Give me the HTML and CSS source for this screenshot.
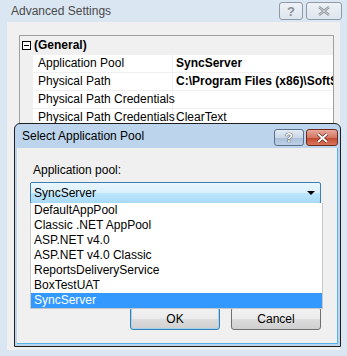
FILE: index.html
```html
<!DOCTYPE html>
<html lang="en">
<head>
    <meta charset="UTF-8">
    <title>Advanced Settings</title>
    <link rel="stylesheet" href="styles.css">
</head>
<body>
<div class="window">
    <div class="titlebar">
        <span class="title">Advanced Settings</span>
        <div class="caption-btns">
            <span class="cap-btn help">?</span>
            <span class="cap-btn close">
                <svg width="12" height="10" viewBox="0 0 12 10"><path d="M1 1 L11 9 M11 1 L1 9" stroke="#8a8f96" stroke-width="2.4" fill="none"/><path d="M1 1 L11 9 M11 1 L1 9" stroke="#e9edf2" stroke-width="0.8" fill="none"/></svg>
            </span>
        </div>
    </div>
    <div class="client">
        <div class="grid">
            <div class="category">
                <span class="toggle"></span>
                <span>(General)</span>
            </div>
            <div class="row"><span class="gutter"></span><span class="name">Application Pool</span><span class="value">SyncServer</span></div>
            <div class="row"><span class="gutter"></span><span class="name">Physical Path</span><span class="value">C:\Program Files (x86)\SoftServe</span></div>
            <div class="row"><span class="gutter"></span><span class="name">Physical Path Credentials</span><span class="value"></span></div>
            <div class="row"><span class="gutter"></span><span class="name">Physical Path Credentials</span><span class="value plain">ClearText</span></div>
        </div>
    </div>
</div>

<div class="dialog">
    <div class="dlg-title">
        <span class="title">Select Application Pool</span>
        <div class="caption-btns">
            <span class="dlg-btn help">?</span>
            <span class="dlg-btn close">
                <svg width="13" height="10" viewBox="0 0 13 10"><path d="M2 1 L11 9 M11 1 L2 9" stroke="#5a1a10" stroke-width="3.2" fill="none"/><path d="M2 1 L11 9 M11 1 L2 9" stroke="#ffffff" stroke-width="2" fill="none"/></svg>
            </span>
        </div>
    </div>
    <div class="dlg-client">
        <div class="label">Application pool:</div>
        <div class="combo">
            <span>SyncServer</span>
            <span class="arrow"></span>
            <ul class="droplist">
                <li>DefaultAppPool</li>
                <li>Classic .NET AppPool</li>
                <li>ASP.NET v4.0</li>
                <li>ASP.NET v4.0 Classic</li>
                <li>ReportsDeliveryService</li>
                <li>BoxTestUAT</li>
                <li class="selected">SyncServer</li>
            </ul>
        </div>
        <div class="buttons">
            <button class="btn default">OK</button>
            <button class="btn">Cancel</button>
        </div>
    </div>
</div>
</body>
</html>
```

FILE: styles.css
```css
body { margin: 0; padding: 0; font-family: "Liberation Sans", Arial, sans-serif; font-size: 12px; color: #000; }

.window {
    width: 347px;
    height: 356px;
    background-color: #dbe6f3;
    display: flex;
    flex-direction: column;
    overflow: hidden;
}
.titlebar { height: 22px; display: flex; align-items: center; justify-content: space-between; padding: 0 5px 0 11px; }
.titlebar .title { color: #4a4a4a; font-size: 12px; }
.caption-btns { display: flex; gap: 3px; }
.cap-btn {
    height: 16px;
    border: 1px solid #8f9aa7;
    border-radius: 3px;
    background: linear-gradient(#eef2f7, #dde5ee);
    display: flex;
    align-items: center;
    justify-content: center;
    color: #8a8f96;
    font-weight: bold;
    font-size: 13px;
}
.cap-btn.help { width: 22px; }
.cap-btn.close { width: 34px; }

.client { flex: 1; margin: 0 7px 6px 7px; background-color: #f0f0f0; padding: 13px 0 0 12px; }
.grid { width: 313px; border: 1px solid #a0a0a0; background: #fff; }
.category { height: 18px; background: #f0f0f0; display: flex; align-items: center; font-weight: bold; gap: 3px; padding-left: 2px; }
.toggle { width: 7px; height: 7px; border: 1px solid #000; position: relative; background: #fff; }
.toggle::after { content: ""; position: absolute; left: 1px; right: 1px; top: 3px; height: 1px; background: #000; }
.row { height: 18px; display: flex; border-top: 1px solid #f0f0f0; box-sizing: border-box; }
.gutter { width: 13px; background: #f0f0f0; flex: none; }
.name { width: 134px; padding-left: 5px; border-right: 1px solid #f0f0f0; line-height: 17px; white-space: nowrap; flex: none; }
.value { padding-left: 3px; font-weight: bold; line-height: 17px; white-space: nowrap; overflow: hidden; flex: 1; }
.value.plain { font-weight: normal; }

.dialog {
    position: absolute;
    left: 14px;
    top: 123px;
    width: 327px;
    height: 224px;
    box-sizing: border-box;
    border: 1px solid #1e1e1e;
    border-radius: 6px 6px 0 0;
    background: #bcd4ec;
    display: flex;
    flex-direction: column;
    padding: 0 2px 2px 2px;
}
.dlg-title { height: 24px; display: flex; align-items: center; justify-content: space-between; padding: 0 0 0 5px; }
.dlg-title .title { font-size: 12px; color: #000; }
.dlg-title .caption-btns { gap: 2px; margin-top: 3px; }
.dlg-btn {
    height: 15px;
    border: 1px solid #5a6f88;
    border-radius: 3px;
    display: flex;
    align-items: center;
    justify-content: center;
    font-weight: bold;
    font-size: 13px;
}
.dlg-btn.help { width: 28px; background: linear-gradient(#e4ecf5 0%, #c9d7e7 50%, #abc0d8 51%, #bcd0e6 100%); color: #fff; text-shadow: 0 0 1px #222, 0 0 1px #222; }
.dlg-btn.close { width: 30px; border-color: #6d2a1e; background: linear-gradient(#e9a99b 0%, #d47865 50%, #c3462d 51%, #d8775a 100%); }

.dlg-client {
    flex: 1;
    background: #f0f0f0;
    border-bottom: 1px solid #53b3ea;
    border-right: 1px solid #53b3ea;
    display: flex;
    flex-direction: column;
    padding: 15px 16px 0 13px;
}
.label { padding-left: 3px; line-height: 14px; }
.combo {
    position: relative;
    margin-top: 5px;
    height: 22px;
    box-sizing: border-box;
    border: 1px solid #3c7fb1;
    border-radius: 2px;
    background: linear-gradient(#eaf6fd 0%, #d9f0fc 50%, #bee6fd 51%, #a7d9f5 100%);
    display: flex;
    align-items: center;
    justify-content: space-between;
    padding: 0 5px 0 3px;
}
.arrow { width: 0; height: 0; border-left: 4px solid transparent; border-right: 4px solid transparent; border-top: 4px solid #000; }
.droplist {
    position: absolute;
    left: -1px;
    top: 20px;
    width: 293px;
    margin: 0;
    padding: 0;
    list-style: none;
    background: #fff;
    border: 1px solid #c8c8c8;
    border-top: none;
    box-sizing: border-box;
    z-index: 10;
}
.droplist li { height: 15px; line-height: 15px; padding-left: 3px; white-space: nowrap; }
.droplist li.selected { background: #3399ff; color: #fff; }

.buttons { display: flex; justify-content: flex-end; gap: 11px; margin-top: 103px; }
.btn {
    width: 90px;
    height: 23px;
    font-family: "Liberation Sans", Arial, sans-serif;
    font-size: 12px;
    border: 1px solid #707070;
    border-radius: 3px;
    background: linear-gradient(#f2f2f2 0%, #ebebeb 50%, #dddddd 51%, #cfcfcf 100%);
    padding: 0;
    color: #000;
}
.btn.default { border-color: #3c7fb1; box-shadow: inset 0 0 0 1px #9ed3f2; }
```
